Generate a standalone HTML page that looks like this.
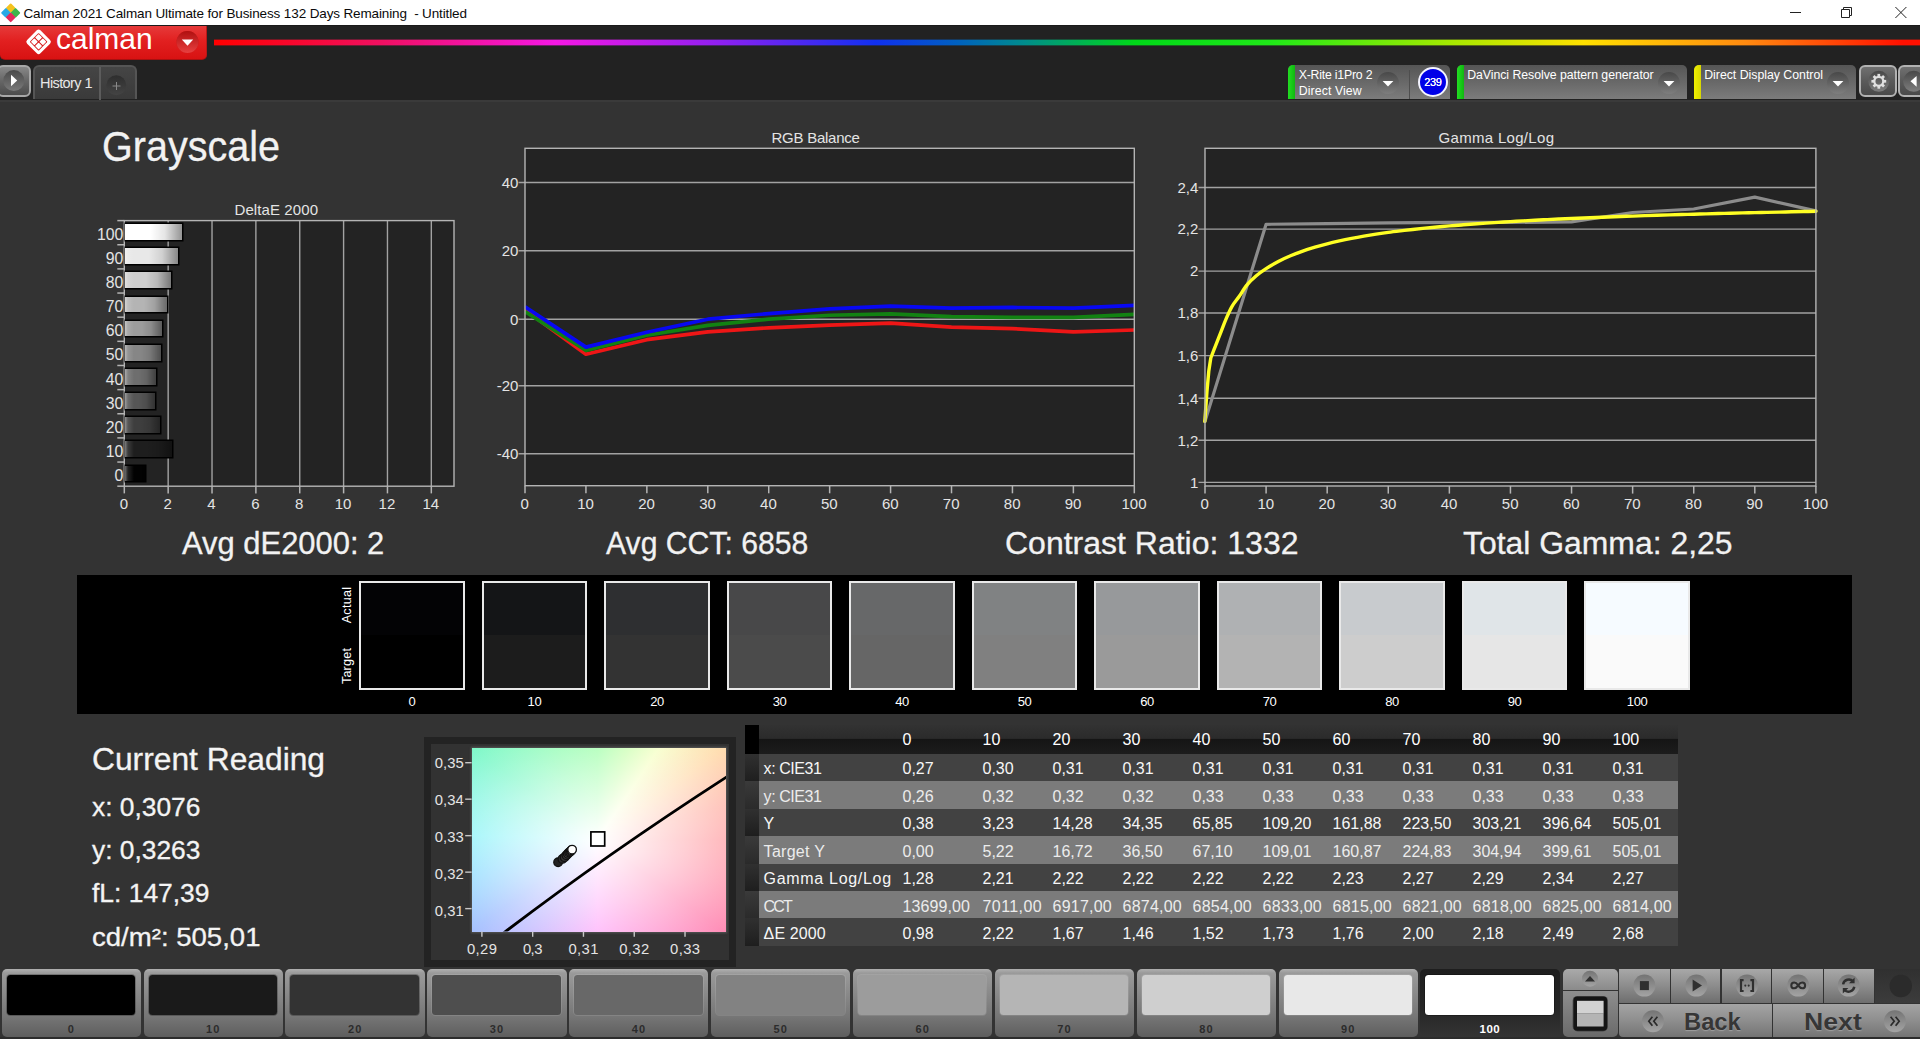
<!DOCTYPE html><html><head><meta charset="utf-8"><title>Calman</title><style>
html,body{margin:0;padding:0;}
body{width:1920px;height:1039px;overflow:hidden;background:#333;font-family:"Liberation Sans",sans-serif;position:relative;}
.t{position:absolute;white-space:nowrap;display:block;}
.b{position:absolute;box-sizing:border-box;}
svg{position:absolute;overflow:visible;}
</style></head><body><div class="b" style="left:0.00px;top:0.00px;width:1920.00px;height:26.00px;background:#fff;"></div><svg style="left:2px;top:3px" width="20" height="20" viewBox="0 0 20 20">
<g transform="translate(8.7,9.8)">
<rect x="-4.6" y="-4.6" width="9.2" height="9.2" rx="1.2" transform="translate(0,-4.6) rotate(45) scale(0.78)" fill="#f4c21f"/>
<rect x="-4.6" y="-4.6" width="9.2" height="9.2" rx="1.2" transform="translate(-4.8,0) rotate(45) scale(0.78)" fill="#27a9e6"/>
<rect x="-4.6" y="-4.6" width="9.2" height="9.2" rx="1.2" transform="translate(4.8,0) rotate(45) scale(0.78)" fill="#3fb54a"/>
<rect x="-4.6" y="-4.6" width="9.2" height="9.2" rx="1.2" transform="translate(0,4.6) rotate(45) scale(0.78)" fill="#e6285a"/>
</g></svg><span class="t" style="left:23.50px;top:5px;font-size:13.50px;line-height:17px;color:#0a0a0a;letter-spacing:-0.128px;white-space:pre;">Calman 2021 Calman Ultimate for Business 132 Days Remaining  - Untitled</span><svg style="left:1780px;top:0" width="140" height="26" viewBox="0 0 140 26">
<path d="M10 12.5h11" stroke="#222" stroke-width="1" fill="none"/>
<path d="M61.5 9.5h8v8h-8z M63.5 9.5v-2h8v8h-2" stroke="#222" stroke-width="1" fill="none"/>
<path d="M115.4 7l11 11M126.4 7l-11 11" stroke="#222" stroke-width="1" fill="none"/>
</svg><div class="b" style="left:0.00px;top:26.00px;width:1920.00px;height:74.00px;background:#222;"></div><div class="b" style="left:214.00px;top:39.00px;width:1706.00px;height:7.00px;opacity:0.38;background:linear-gradient(90deg,#ff0000 0%,#f01060 9.7%,#f418e4 20%,#9020f0 29.5%,#1030f0 38.8%,#0060c0 43.5%,#008c8c 47.5%,#00d818 54%,#20e818 62%,#a8e800 72.7%,#ffe000 80.3%,#ff8a10 89.8%,#ff1000 99%);"></div><div class="b" style="left:214.00px;top:40.00px;width:1706.00px;height:5.00px;background:linear-gradient(90deg,#ff0000 0%,#f01060 9.7%,#f418e4 20%,#9020f0 29.5%,#1030f0 38.8%,#0060c0 43.5%,#008c8c 47.5%,#00d818 54%,#20e818 62%,#a8e800 72.7%,#ffe000 80.3%,#ff8a10 89.8%,#ff1000 99%);"></div><div class="b" style="left:0.00px;top:25.00px;width:1920.00px;height:1.00px;background:#1a1a1a;"></div><div class="b" style="left:0.00px;top:26.00px;width:207.00px;height:34.00px;background:linear-gradient(180deg,#e63a3a 0%,#e22020 45%,#d81212 100%);border-radius:0 0 5px 5px;border-bottom:1px solid #a81010;border-right:1px solid #b81818;"></div><svg style="left:0;top:26px" width="207" height="33" viewBox="0 0 207 33">
<g transform="translate(38.6,15.8) rotate(45)">
<rect x="-9.4" y="-9.4" width="18.8" height="18.8" rx="2.6" fill="#fff"/>
<rect x="-6.3" y="-6.3" width="12.6" height="12.6" rx="0.8" fill="#d81c1c"/>
<rect x="-5.5" y="-5.5" width="5.0" height="5.0" rx="0.7" fill="#fff"/>
<rect x="0.5" y="-5.5" width="5.0" height="5.0" rx="0.7" fill="#fff"/>
<rect x="-5.5" y="0.5" width="5.0" height="5.0" rx="0.7" fill="#fff"/>
<rect x="0.5" y="0.5" width="5.0" height="5.0" rx="0.7" fill="#fff"/>
</g>
<circle cx="187.5" cy="16" r="11" fill="#c81818"/>
<circle cx="187.5" cy="16" r="11" fill="url(#rdg)"/>
<path d="M181.8 13.6h11.4l-5.7 6.2z" fill="#fff"/>
<defs><linearGradient id="rdg" x1="0" y1="0" x2="0" y2="1"><stop offset="0" stop-color="#b01010"/><stop offset="1" stop-color="#e84040"/></linearGradient></defs>
</svg><span class="t" style="left:56.30px;top:21px;font-size:28.60px;line-height:36px;color:#fff;transform:scaleX(1.0488);transform-origin:0 0;">calman</span><div class="b" style="left:-3.00px;top:65.00px;width:33.50px;height:32.00px;border-radius:6px;border:2px solid #a8a8a8;background:linear-gradient(180deg,#888 0%,#666 50%,#4c4c4c 100%);"></div><svg style="left:0;top:65px" width="32" height="32" viewBox="0 0 32 32">
<defs><linearGradient id="pg1" x1="0" y1="0" x2="0" y2="1"><stop offset="0" stop-color="#4a4a4a"/><stop offset="1" stop-color="#7a7a7a"/></linearGradient></defs>
<circle cx="13.8" cy="15.6" r="10.5" fill="url(#pg1)"/>
<path d="M11 9.8v11.4l6.2-5.7z" fill="#fff"/></svg><div class="b" style="left:33.00px;top:65.00px;width:104.00px;height:34.20px;border-radius:6px 6px 0 0;border:2px solid #555;border-bottom:none;background:linear-gradient(180deg,#454545 0%,#3a3a3a 100%);"></div><div class="b" style="left:99.00px;top:67.00px;width:1.50px;height:33.00px;background:#5c5c5c;"></div><span class="t" style="left:40.00px;top:74px;font-size:14.50px;line-height:18px;color:#e8e8e8;letter-spacing:-0.588px;">History 1</span><svg style="left:104px;top:73px" width="26" height="26" viewBox="0 0 26 26">
<defs><linearGradient id="pg2" x1="0" y1="0" x2="0" y2="1"><stop offset="0" stop-color="#2e2e2e"/><stop offset="1" stop-color="#444"/></linearGradient></defs>
<circle cx="12.3" cy="12.3" r="10" fill="url(#pg2)"/>
<path d="M8.5 13h8M12.5 9v8" stroke="#8a8a8a" stroke-width="1" fill="none"/></svg><svg width="0" height="0"><defs><linearGradient id="ddg" x1="0" y1="0" x2="0" y2="1"><stop offset="0" stop-color="#484848"/><stop offset="1" stop-color="#7e7e7e"/></linearGradient></defs></svg><div class="b" style="left:1288.30px;top:65.00px;width:161.50px;height:34.00px;border-radius:5px 5px 0 0;background:linear-gradient(180deg,#555 0%,#6a6a6a 55%,#7c7c7c 100%);overflow:hidden;"><div style="position:absolute;left:0;top:0;width:7px;height:100%;background:linear-gradient(90deg,#22dd22,#10b810);"></div></div><div class="b" style="left:1456.70px;top:65.00px;width:230.00px;height:34.00px;border-radius:5px 5px 0 0;background:linear-gradient(180deg,#555 0%,#6a6a6a 55%,#7c7c7c 100%);overflow:hidden;"><div style="position:absolute;left:0;top:0;width:7px;height:100%;background:linear-gradient(90deg,#22dd22,#10b810);"></div></div><div class="b" style="left:1694.20px;top:65.00px;width:161.60px;height:34.00px;border-radius:5px 5px 0 0;background:linear-gradient(180deg,#555 0%,#6a6a6a 55%,#7c7c7c 100%);overflow:hidden;"><div style="position:absolute;left:0;top:0;width:7px;height:100%;background:linear-gradient(90deg,#f0f000,#d8d800);"></div></div><div class="b" style="left:1408.50px;top:70.00px;width:1.50px;height:29.00px;background:#4e4e4e;"></div><span class="t" style="left:1298.70px;top:67px;font-size:12.30px;line-height:16px;color:#fff;letter-spacing:-0.212px;">X-Rite i1Pro 2</span><span class="t" style="left:1298.70px;top:83px;font-size:12.30px;line-height:16px;color:#fff;letter-spacing:0.103px;">Direct View</span><span class="t" style="left:1467.20px;top:67px;font-size:12.30px;line-height:16px;color:#fff;letter-spacing:-0.040px;">DaVinci Resolve pattern generator</span><span class="t" style="left:1704.20px;top:67px;font-size:12.30px;line-height:16px;color:#fff;letter-spacing:-0.006px;">Direct Display Control</span><svg style="left:1375.5px;top:70.5px" width="24" height="24" viewBox="0 0 24 24">
<circle cx="12" cy="12" r="11" fill="url(#ddg)"/><path d="M6.6 10h10.8l-5.4 5.6z" fill="#fff"/></svg><svg style="left:1657.2px;top:71.3px" width="24" height="24" viewBox="0 0 24 24">
<circle cx="12" cy="12" r="11" fill="url(#ddg)"/><path d="M6.6 10h10.8l-5.4 5.6z" fill="#fff"/></svg><svg style="left:1825.5px;top:71.3px" width="24" height="24" viewBox="0 0 24 24">
<circle cx="12" cy="12" r="11" fill="url(#ddg)"/><path d="M6.6 10h10.8l-5.4 5.6z" fill="#fff"/></svg><div class="b" style="left:1418.00px;top:67.20px;width:30.00px;height:30.00px;border-radius:50%;background:#0000e8;border:2px solid #f4f4ff;"></div><span class="t" style="left:1424.25px;top:75px;font-size:11.00px;line-height:14px;color:#fff;letter-spacing:-0.426px;text-shadow:0 0 0.4px #fff;">239</span><div class="b" style="left:1859.30px;top:65.00px;width:38.00px;height:32.00px;border-radius:6px;border:2px solid #b2b2b2;background:linear-gradient(180deg,#707070 0%,#5a5a5a 50%,#4a4a4a 100%);"></div><div class="b" style="left:1897.60px;top:65.00px;width:30.00px;height:32.00px;border-radius:6px;border:2px solid #b2b2b2;background:linear-gradient(180deg,#707070 0%,#5a5a5a 50%,#4a4a4a 100%);"></div><svg style="left:1866px;top:69px" width="26" height="26" viewBox="0 0 26 26">
<circle cx="12.8" cy="12.3" r="10.5" fill="url(#ddg)"/>
<g transform="translate(12.8,12.3)" fill="#e0e0e0">
<circle r="4.5" fill="none" stroke="#e0e0e0" stroke-width="2.3"/>
<rect x="-1.35" y="-7.4" width="2.7" height="2.6" transform="rotate(0)"/><rect x="-1.35" y="-7.4" width="2.7" height="2.6" transform="rotate(45)"/><rect x="-1.35" y="-7.4" width="2.7" height="2.6" transform="rotate(90)"/><rect x="-1.35" y="-7.4" width="2.7" height="2.6" transform="rotate(135)"/><rect x="-1.35" y="-7.4" width="2.7" height="2.6" transform="rotate(180)"/><rect x="-1.35" y="-7.4" width="2.7" height="2.6" transform="rotate(225)"/><rect x="-1.35" y="-7.4" width="2.7" height="2.6" transform="rotate(270)"/><rect x="-1.35" y="-7.4" width="2.7" height="2.6" transform="rotate(315)"/>
</g></svg><svg style="left:1900px;top:69px" width="20" height="26" viewBox="0 0 20 26">
<circle cx="13.6" cy="12.3" r="10.5" fill="url(#ddg)"/><path d="M16.6 6.9v10.8l-6.1-5.4z" fill="#fff"/></svg><div class="b" style="left:0.00px;top:100.00px;width:1920.00px;height:1.50px;background:#3a3a3a;"></div><div class="b" style="left:0.00px;top:1037.20px;width:1920.00px;height:2.00px;background:#2c2c2c;"></div><span class="t" style="left:102.00px;top:121px;font-size:42.00px;line-height:51px;color:#f2f2f2;transform:scaleX(0.9415);transform-origin:0 0;-webkit-text-stroke:0.3px #f2f2f2;">Grayscale</span><span class="t" style="left:182.00px;top:524px;font-size:31.00px;line-height:39px;color:#f2f2f2;transform:scaleX(0.9974);transform-origin:0 0;-webkit-text-stroke:0.3px #f2f2f2;">Avg dE2000: 2</span><span class="t" style="left:605.60px;top:524px;font-size:31.00px;line-height:39px;color:#f2f2f2;transform:scaleX(0.9724);transform-origin:0 0;-webkit-text-stroke:0.3px #f2f2f2;">Avg CCT: 6858</span><span class="t" style="left:1004.50px;top:524px;font-size:31.00px;line-height:39px;color:#f2f2f2;transform:scaleX(1.0322);transform-origin:0 0;-webkit-text-stroke:0.3px #f2f2f2;">Contrast Ratio: 1332</span><span class="t" style="left:1463.00px;top:524px;font-size:31.00px;line-height:39px;color:#f2f2f2;transform:scaleX(1.0290);transform-origin:0 0;-webkit-text-stroke:0.3px #f2f2f2;">Total Gamma: 2,25</span><div class="b" style="left:124.30px;top:220.60px;width:329.70px;height:265.60px;background:#232323;"></div><svg style="left:0;top:0" width="1920" height="1039"><path d="M168.16 220.60 V486.20" stroke="#a2a2a2" stroke-width="1.4"/><path d="M212.02 220.60 V486.20" stroke="#a2a2a2" stroke-width="1.4"/><path d="M255.88 220.60 V486.20" stroke="#a2a2a2" stroke-width="1.4"/><path d="M299.74 220.60 V486.20" stroke="#a2a2a2" stroke-width="1.4"/><path d="M343.60 220.60 V486.20" stroke="#a2a2a2" stroke-width="1.4"/><path d="M387.46 220.60 V486.20" stroke="#a2a2a2" stroke-width="1.4"/><path d="M431.32 220.60 V486.20" stroke="#a2a2a2" stroke-width="1.4"/><rect x="124.30" y="220.60" width="329.70" height="265.60" fill="none" stroke="#b4b4b4" stroke-width="1.4"/><path d="M124.30 486.20 V493.40" stroke="#b4b4b4" stroke-width="1.5"/><path d="M168.16 486.20 V493.40" stroke="#b4b4b4" stroke-width="1.5"/><path d="M212.02 486.20 V493.40" stroke="#b4b4b4" stroke-width="1.5"/><path d="M255.88 486.20 V493.40" stroke="#b4b4b4" stroke-width="1.5"/><path d="M299.74 486.20 V493.40" stroke="#b4b4b4" stroke-width="1.5"/><path d="M343.60 486.20 V493.40" stroke="#b4b4b4" stroke-width="1.5"/><path d="M387.46 486.20 V493.40" stroke="#b4b4b4" stroke-width="1.5"/><path d="M431.32 486.20 V493.40" stroke="#b4b4b4" stroke-width="1.5"/><path d="M117.30 220.60 H124.30" stroke="#b4b4b4" stroke-width="1.5"/><path d="M117.30 244.75 H124.30" stroke="#b4b4b4" stroke-width="1.5"/><path d="M117.30 268.89 H124.30" stroke="#b4b4b4" stroke-width="1.5"/><path d="M117.30 293.04 H124.30" stroke="#b4b4b4" stroke-width="1.5"/><path d="M117.30 317.18 H124.30" stroke="#b4b4b4" stroke-width="1.5"/><path d="M117.30 341.33 H124.30" stroke="#b4b4b4" stroke-width="1.5"/><path d="M117.30 365.47 H124.30" stroke="#b4b4b4" stroke-width="1.5"/><path d="M117.30 389.62 H124.30" stroke="#b4b4b4" stroke-width="1.5"/><path d="M117.30 413.76 H124.30" stroke="#b4b4b4" stroke-width="1.5"/><path d="M117.30 437.91 H124.30" stroke="#b4b4b4" stroke-width="1.5"/><path d="M117.30 462.05 H124.30" stroke="#b4b4b4" stroke-width="1.5"/><path d="M117.30 486.20 H124.30" stroke="#b4b4b4" stroke-width="1.5"/></svg><div class="b" style="left:125.00px;top:223.10px;width:57.87px;height:17.70px;background:linear-gradient(90deg,rgba(255,255,255,0.00) 0px,rgba(255,255,255,0.00) 3px,rgba(255,255,255,0) 9px,rgba(0,0,0,0) 45%,rgba(0,0,0,0.10) 70%,rgba(0,0,0,0.42) 100%),rgb(255,255,255);border:1.5px solid #000;border-left:none;box-shadow:0 0 0 0.5px #000;"></div><span class="t" style="left:96.94px;top:225px;font-size:15.80px;line-height:19px;color:#e4e4e4;">100</span><div class="b" style="left:125.00px;top:247.25px;width:53.71px;height:17.70px;background:linear-gradient(90deg,rgba(255,255,255,0.42) 0px,rgba(255,255,255,0.13) 3px,rgba(255,255,255,0) 9px,rgba(0,0,0,0) 45%,rgba(0,0,0,0.10) 70%,rgba(0,0,0,0.42) 100%),rgb(232,232,232);border:1.5px solid #000;border-left:none;box-shadow:0 0 0 0.5px #000;"></div><span class="t" style="left:105.73px;top:249px;font-size:15.80px;line-height:19px;color:#e4e4e4;">90</span><div class="b" style="left:125.00px;top:271.39px;width:46.91px;height:17.70px;background:linear-gradient(90deg,rgba(255,255,255,0.42) 0px,rgba(255,255,255,0.13) 3px,rgba(255,255,255,0) 9px,rgba(0,0,0,0) 45%,rgba(0,0,0,0.10) 70%,rgba(0,0,0,0.42) 100%),rgb(206,206,206);border:1.5px solid #000;border-left:none;box-shadow:0 0 0 0.5px #000;"></div><span class="t" style="left:105.73px;top:273px;font-size:15.80px;line-height:19px;color:#e4e4e4;">80</span><div class="b" style="left:125.00px;top:295.54px;width:42.96px;height:17.70px;background:linear-gradient(90deg,rgba(255,255,255,0.42) 0px,rgba(255,255,255,0.13) 3px,rgba(255,255,255,0) 9px,rgba(0,0,0,0) 45%,rgba(0,0,0,0.10) 70%,rgba(0,0,0,0.42) 100%),rgb(180,180,180);border:1.5px solid #000;border-left:none;box-shadow:0 0 0 0.5px #000;"></div><span class="t" style="left:105.73px;top:297px;font-size:15.80px;line-height:19px;color:#e4e4e4;">70</span><div class="b" style="left:125.00px;top:319.68px;width:37.70px;height:17.70px;background:linear-gradient(90deg,rgba(255,255,255,0.42) 0px,rgba(255,255,255,0.13) 3px,rgba(255,255,255,0) 9px,rgba(0,0,0,0) 45%,rgba(0,0,0,0.10) 70%,rgba(0,0,0,0.42) 100%),rgb(156,156,156);border:1.5px solid #000;border-left:none;box-shadow:0 0 0 0.5px #000;"></div><span class="t" style="left:105.73px;top:321px;font-size:15.80px;line-height:19px;color:#e4e4e4;">60</span><div class="b" style="left:125.00px;top:343.83px;width:37.04px;height:17.70px;background:linear-gradient(90deg,rgba(255,255,255,0.42) 0px,rgba(255,255,255,0.13) 3px,rgba(255,255,255,0) 9px,rgba(0,0,0,0) 45%,rgba(0,0,0,0.10) 70%,rgba(0,0,0,0.42) 100%),rgb(134,134,134);border:1.5px solid #000;border-left:none;box-shadow:0 0 0 0.5px #000;"></div><span class="t" style="left:105.73px;top:345px;font-size:15.80px;line-height:19px;color:#e4e4e4;">50</span><div class="b" style="left:125.00px;top:367.97px;width:32.43px;height:17.70px;background:linear-gradient(90deg,rgba(255,255,255,0.42) 0px,rgba(255,255,255,0.13) 3px,rgba(255,255,255,0) 9px,rgba(0,0,0,0) 45%,rgba(0,0,0,0.10) 70%,rgba(0,0,0,0.42) 100%),rgb(110,110,110);border:1.5px solid #000;border-left:none;box-shadow:0 0 0 0.5px #000;"></div><span class="t" style="left:105.73px;top:370px;font-size:15.80px;line-height:19px;color:#e4e4e4;">40</span><div class="b" style="left:125.00px;top:392.12px;width:31.12px;height:17.70px;background:linear-gradient(90deg,rgba(255,255,255,0.42) 0px,rgba(255,255,255,0.13) 3px,rgba(255,255,255,0) 9px,rgba(0,0,0,0) 45%,rgba(0,0,0,0.10) 70%,rgba(0,0,0,0.42) 100%),rgb(86,86,86);border:1.5px solid #000;border-left:none;box-shadow:0 0 0 0.5px #000;"></div><span class="t" style="left:105.73px;top:394px;font-size:15.80px;line-height:19px;color:#e4e4e4;">30</span><div class="b" style="left:125.00px;top:416.26px;width:35.72px;height:17.70px;background:linear-gradient(90deg,rgba(255,255,255,0.42) 0px,rgba(255,255,255,0.13) 3px,rgba(255,255,255,0) 9px,rgba(0,0,0,0) 45%,rgba(0,0,0,0.10) 70%,rgba(0,0,0,0.42) 100%),rgb(62,62,62);border:1.5px solid #000;border-left:none;box-shadow:0 0 0 0.5px #000;"></div><span class="t" style="left:105.73px;top:418px;font-size:15.80px;line-height:19px;color:#e4e4e4;">20</span><div class="b" style="left:125.00px;top:440.41px;width:47.78px;height:17.70px;background:linear-gradient(90deg,rgba(255,255,255,0.42) 0px,rgba(255,255,255,0.13) 3px,rgba(255,255,255,0) 9px,rgba(0,0,0,0) 45%,rgba(0,0,0,0.10) 70%,rgba(0,0,0,0.42) 100%),rgb(30,30,30);border:1.5px solid #000;border-left:none;box-shadow:0 0 0 0.5px #000;"></div><span class="t" style="left:105.73px;top:442px;font-size:15.80px;line-height:19px;color:#e4e4e4;">10</span><div class="b" style="left:125.00px;top:464.55px;width:20.59px;height:17.70px;background:linear-gradient(90deg,rgba(255,255,255,0.42) 0px,rgba(255,255,255,0.13) 3px,rgba(255,255,255,0) 9px,rgba(0,0,0,0) 45%,rgba(0,0,0,0.10) 70%,rgba(0,0,0,0.42) 100%),rgb(2,2,2);border:1.5px solid #000;border-left:none;box-shadow:0 0 0 0.5px #000;"></div><span class="t" style="left:114.51px;top:466px;font-size:15.80px;line-height:19px;color:#e4e4e4;">0</span><span class="t" style="left:119.63px;top:494px;font-size:15.00px;line-height:19px;color:#e4e4e4;">0</span><span class="t" style="left:163.49px;top:494px;font-size:15.00px;line-height:19px;color:#e4e4e4;">2</span><span class="t" style="left:207.35px;top:494px;font-size:15.00px;line-height:19px;color:#e4e4e4;">4</span><span class="t" style="left:251.21px;top:494px;font-size:15.00px;line-height:19px;color:#e4e4e4;">6</span><span class="t" style="left:295.07px;top:494px;font-size:15.00px;line-height:19px;color:#e4e4e4;">8</span><span class="t" style="left:334.76px;top:494px;font-size:15.00px;line-height:19px;color:#e4e4e4;">10</span><span class="t" style="left:378.62px;top:494px;font-size:15.00px;line-height:19px;color:#e4e4e4;">12</span><span class="t" style="left:422.48px;top:494px;font-size:15.00px;line-height:19px;color:#e4e4e4;">14</span><span class="t" style="left:234.50px;top:200px;font-size:15.00px;line-height:19px;color:#e4e4e4;letter-spacing:0.093px;">DeltaE 2000</span><div class="b" style="left:525.00px;top:148.30px;width:609.30px;height:337.40px;background:#232323;"></div><span class="t" style="left:501.71px;top:173px;font-size:15.00px;line-height:19px;color:#e4e4e4;">40</span><span class="t" style="left:501.71px;top:241px;font-size:15.00px;line-height:19px;color:#e4e4e4;">20</span><span class="t" style="left:510.06px;top:310px;font-size:15.00px;line-height:19px;color:#e4e4e4;">0</span><span class="t" style="left:496.72px;top:376px;font-size:15.00px;line-height:19px;color:#e4e4e4;">-20</span><span class="t" style="left:496.72px;top:444px;font-size:15.00px;line-height:19px;color:#e4e4e4;">-40</span><svg style="left:0;top:0" width="1920" height="1039"><path d="M518.50 182.50 H1134.30" stroke="#a2a2a2" stroke-width="1.4"/><path d="M518.50 250.80 H1134.30" stroke="#a2a2a2" stroke-width="1.4"/><path d="M518.50 319.20 H1134.30" stroke="#a2a2a2" stroke-width="1.4"/><path d="M518.50 385.80 H1134.30" stroke="#a2a2a2" stroke-width="1.4"/><path d="M518.50 453.70 H1134.30" stroke="#a2a2a2" stroke-width="1.4"/><clipPath id="rgbc"><rect x="525.00" y="148.30" width="610.30" height="337.40"/></clipPath><g clip-path="url(#rgbc)" fill="none" stroke-width="3.7" stroke-linejoin="round"><path d="M525.00 309.85L585.93 354.26L646.86 339.68L707.79 331.88L768.72 327.81L829.65 325.10L890.58 323.07L951.51 327.14L1012.44 328.66L1073.37 331.88L1134.30 330.02" stroke="#ee1616"/><path d="M525.00 311.54L585.93 350.53L646.86 335.27L707.79 325.44L768.72 319.20L829.65 315.27L890.58 313.92L951.51 316.63L1012.44 317.41L1073.37 317.41L1134.30 314.42" stroke="#128212"/><path d="M525.00 306.80L585.93 347.14L646.86 332.22L707.79 319.20L768.72 313.58L829.65 308.83L890.58 306.12L951.51 308.15L1012.44 307.47L1073.37 308.15L1134.30 305.44" stroke="#0808f2"/></g><rect x="525.00" y="148.30" width="609.30" height="337.40" fill="none" stroke="#b4b4b4" stroke-width="1.4"/><path d="M525.00 485.70 V493.30" stroke="#b4b4b4" stroke-width="1.5"/><path d="M585.93 485.70 V493.30" stroke="#b4b4b4" stroke-width="1.5"/><path d="M646.86 485.70 V493.30" stroke="#b4b4b4" stroke-width="1.5"/><path d="M707.79 485.70 V493.30" stroke="#b4b4b4" stroke-width="1.5"/><path d="M768.72 485.70 V493.30" stroke="#b4b4b4" stroke-width="1.5"/><path d="M829.65 485.70 V493.30" stroke="#b4b4b4" stroke-width="1.5"/><path d="M890.58 485.70 V493.30" stroke="#b4b4b4" stroke-width="1.5"/><path d="M951.51 485.70 V493.30" stroke="#b4b4b4" stroke-width="1.5"/><path d="M1012.44 485.70 V493.30" stroke="#b4b4b4" stroke-width="1.5"/><path d="M1073.37 485.70 V493.30" stroke="#b4b4b4" stroke-width="1.5"/><path d="M1134.30 485.70 V493.30" stroke="#b4b4b4" stroke-width="1.5"/></svg><span class="t" style="left:520.53px;top:494px;font-size:15.00px;line-height:19px;color:#e4e4e4;">0</span><span class="t" style="left:577.29px;top:494px;font-size:15.00px;line-height:19px;color:#e4e4e4;">10</span><span class="t" style="left:638.22px;top:494px;font-size:15.00px;line-height:19px;color:#e4e4e4;">20</span><span class="t" style="left:699.15px;top:494px;font-size:15.00px;line-height:19px;color:#e4e4e4;">30</span><span class="t" style="left:760.08px;top:494px;font-size:15.00px;line-height:19px;color:#e4e4e4;">40</span><span class="t" style="left:821.01px;top:494px;font-size:15.00px;line-height:19px;color:#e4e4e4;">50</span><span class="t" style="left:881.94px;top:494px;font-size:15.00px;line-height:19px;color:#e4e4e4;">60</span><span class="t" style="left:942.87px;top:494px;font-size:15.00px;line-height:19px;color:#e4e4e4;">70</span><span class="t" style="left:1003.80px;top:494px;font-size:15.00px;line-height:19px;color:#e4e4e4;">80</span><span class="t" style="left:1064.73px;top:494px;font-size:15.00px;line-height:19px;color:#e4e4e4;">90</span><span class="t" style="left:1121.48px;top:494px;font-size:15.00px;line-height:19px;color:#e4e4e4;">100</span><span class="t" style="left:771.50px;top:128px;font-size:15.00px;line-height:19px;color:#e4e4e4;letter-spacing:-0.258px;">RGB Balance</span><div class="b" style="left:1205.00px;top:148.30px;width:610.90px;height:337.70px;background:#232323;"></div><span class="t" style="left:1177.54px;top:178px;font-size:15.00px;line-height:19px;color:#e4e4e4;">2,4</span><span class="t" style="left:1177.54px;top:219px;font-size:15.00px;line-height:19px;color:#e4e4e4;">2,2</span><span class="t" style="left:1190.06px;top:261px;font-size:15.00px;line-height:19px;color:#e4e4e4;">2</span><span class="t" style="left:1177.54px;top:303px;font-size:15.00px;line-height:19px;color:#e4e4e4;">1,8</span><span class="t" style="left:1177.54px;top:346px;font-size:15.00px;line-height:19px;color:#e4e4e4;">1,6</span><span class="t" style="left:1177.54px;top:389px;font-size:15.00px;line-height:19px;color:#e4e4e4;">1,4</span><span class="t" style="left:1177.54px;top:431px;font-size:15.00px;line-height:19px;color:#e4e4e4;">1,2</span><span class="t" style="left:1190.06px;top:473px;font-size:15.00px;line-height:19px;color:#e4e4e4;">1</span><svg style="left:0;top:0" width="1920" height="1039"><path d="M1198.50 187.50 H1815.90" stroke="#a2a2a2" stroke-width="1.4"/><path d="M1198.50 229.10 H1815.90" stroke="#a2a2a2" stroke-width="1.4"/><path d="M1198.50 271.10 H1815.90" stroke="#a2a2a2" stroke-width="1.4"/><path d="M1198.50 313.00 H1815.90" stroke="#a2a2a2" stroke-width="1.4"/><path d="M1198.50 355.60 H1815.90" stroke="#a2a2a2" stroke-width="1.4"/><path d="M1198.50 398.30 H1815.90" stroke="#a2a2a2" stroke-width="1.4"/><path d="M1198.50 440.30 H1815.90" stroke="#a2a2a2" stroke-width="1.4"/><path d="M1198.50 482.40 H1815.90" stroke="#a2a2a2" stroke-width="1.4"/><g fill="none" stroke-linejoin="round" stroke-linecap="round"><path d="M1205.00 421.40L1266.09 224.30L1327.18 223.60L1388.27 222.90L1449.36 222.40L1510.45 222.40L1571.54 221.90L1632.63 212.50L1693.72 209.00L1754.81 197.10L1815.90 210.90" stroke="#8c8c8c" stroke-width="3.2"/><path d="M1204.80 421.40L1207.00 391.00L1208.80 371.00L1210.80 358.00 L1210.80 358.00C1211.55 356.05 1213.60 350.65 1215.30 346.30C1217.00 341.95 1219.20 336.47 1221.00 331.90C1222.80 327.33 1224.28 323.12 1226.10 318.90C1227.92 314.68 1229.73 310.33 1231.90 306.60C1234.07 302.87 1236.58 300.12 1239.10 296.50C1241.62 292.88 1244.18 288.32 1247.00 284.90C1249.82 281.48 1252.82 278.70 1256.00 276.00C1259.18 273.30 1262.37 271.11 1266.09 268.69C1269.81 266.27 1274.24 263.64 1278.31 261.49C1282.38 259.33 1286.45 257.50 1290.53 255.77C1294.60 254.04 1298.67 252.52 1302.74 251.09C1306.82 249.66 1310.89 248.39 1314.96 247.18C1319.03 245.97 1323.11 244.88 1327.18 243.84C1331.25 242.80 1335.33 241.86 1339.40 240.95C1343.47 240.05 1347.54 239.22 1351.62 238.42C1355.69 237.63 1359.76 236.89 1363.83 236.18C1367.91 235.47 1371.98 234.81 1376.05 234.17C1380.12 233.54 1384.20 232.92 1388.27 232.36C1392.34 231.81 1396.42 231.32 1400.49 230.83C1404.56 230.34 1408.63 229.88 1412.71 229.44C1416.78 229.00 1420.85 228.58 1424.92 228.17C1429.00 227.76 1433.07 227.38 1437.14 227.01C1441.21 226.63 1445.29 226.28 1449.36 225.93C1453.43 225.59 1457.51 225.26 1461.58 224.94C1465.65 224.62 1469.72 224.32 1473.80 224.02C1477.87 223.73 1481.94 223.44 1486.01 223.17C1490.09 222.89 1494.16 222.63 1498.23 222.37C1502.30 222.11 1506.38 221.86 1510.45 221.62C1514.52 221.38 1518.60 221.14 1522.67 220.92C1526.74 220.69 1530.81 220.47 1534.89 220.26C1538.96 220.04 1543.03 219.84 1547.10 219.63C1551.18 219.43 1555.25 219.24 1559.32 219.04C1563.39 218.85 1567.47 218.67 1571.54 218.49C1575.61 218.31 1579.69 218.13 1583.76 217.96C1587.83 217.79 1591.90 217.62 1595.98 217.46C1600.05 217.29 1604.12 217.13 1608.19 216.98C1612.27 216.82 1616.34 216.67 1620.41 216.52C1624.48 216.38 1628.56 216.23 1632.63 216.09C1636.70 215.95 1640.78 215.81 1644.85 215.67C1648.92 215.54 1652.99 215.41 1657.07 215.28C1661.14 215.15 1665.21 215.02 1669.28 214.90C1673.36 214.77 1677.43 214.65 1681.50 214.53C1685.57 214.41 1689.65 214.30 1693.72 214.18C1697.79 214.07 1701.87 213.96 1705.94 213.85C1710.01 213.74 1714.08 213.63 1718.16 213.52C1722.23 213.42 1726.30 213.31 1730.37 213.21C1734.45 213.11 1738.52 213.01 1742.59 212.91C1746.66 212.81 1750.74 212.72 1754.81 212.62C1758.88 212.53 1762.96 212.44 1767.03 212.34C1771.10 212.25 1775.17 212.16 1779.25 212.08C1783.32 211.99 1787.39 211.90 1791.46 211.81C1795.54 211.73 1799.61 211.65 1803.68 211.56C1807.75 211.48 1813.86 211.36 1815.90 211.32" stroke="#ffff24" stroke-width="3.4"/></g><rect x="1205.00" y="148.30" width="610.90" height="337.70" fill="none" stroke="#b4b4b4" stroke-width="1.4"/><path d="M1205.00 486.00 V493.60" stroke="#b4b4b4" stroke-width="1.5"/><path d="M1266.09 486.00 V493.60" stroke="#b4b4b4" stroke-width="1.5"/><path d="M1327.18 486.00 V493.60" stroke="#b4b4b4" stroke-width="1.5"/><path d="M1388.27 486.00 V493.60" stroke="#b4b4b4" stroke-width="1.5"/><path d="M1449.36 486.00 V493.60" stroke="#b4b4b4" stroke-width="1.5"/><path d="M1510.45 486.00 V493.60" stroke="#b4b4b4" stroke-width="1.5"/><path d="M1571.54 486.00 V493.60" stroke="#b4b4b4" stroke-width="1.5"/><path d="M1632.63 486.00 V493.60" stroke="#b4b4b4" stroke-width="1.5"/><path d="M1693.72 486.00 V493.60" stroke="#b4b4b4" stroke-width="1.5"/><path d="M1754.81 486.00 V493.60" stroke="#b4b4b4" stroke-width="1.5"/><path d="M1815.90 486.00 V493.60" stroke="#b4b4b4" stroke-width="1.5"/></svg><span class="t" style="left:1200.53px;top:494px;font-size:15.00px;line-height:19px;color:#e4e4e4;">0</span><span class="t" style="left:1257.45px;top:494px;font-size:15.00px;line-height:19px;color:#e4e4e4;">10</span><span class="t" style="left:1318.54px;top:494px;font-size:15.00px;line-height:19px;color:#e4e4e4;">20</span><span class="t" style="left:1379.63px;top:494px;font-size:15.00px;line-height:19px;color:#e4e4e4;">30</span><span class="t" style="left:1440.72px;top:494px;font-size:15.00px;line-height:19px;color:#e4e4e4;">40</span><span class="t" style="left:1501.81px;top:494px;font-size:15.00px;line-height:19px;color:#e4e4e4;">50</span><span class="t" style="left:1562.90px;top:494px;font-size:15.00px;line-height:19px;color:#e4e4e4;">60</span><span class="t" style="left:1623.99px;top:494px;font-size:15.00px;line-height:19px;color:#e4e4e4;">70</span><span class="t" style="left:1685.08px;top:494px;font-size:15.00px;line-height:19px;color:#e4e4e4;">80</span><span class="t" style="left:1746.17px;top:494px;font-size:15.00px;line-height:19px;color:#e4e4e4;">90</span><span class="t" style="left:1803.08px;top:494px;font-size:15.00px;line-height:19px;color:#e4e4e4;">100</span><span class="t" style="left:1438.50px;top:128px;font-size:15.00px;line-height:19px;color:#e4e4e4;letter-spacing:0.313px;">Gamma Log/Log</span><div class="b" style="left:76.50px;top:574.60px;width:1775.00px;height:139.20px;background:#000;"></div><div class="b" style="left:359.20px;top:581.00px;width:105.40px;height:109.40px;border:2px solid #e9e9e9;background:linear-gradient(180deg,#030305 0,#030305 50%,#000000 50%,#000000 100%);"></div><span class="t" style="left:408.48px;top:693px;font-size:13.00px;line-height:17px;color:#fff;">0</span><div class="b" style="left:481.72px;top:581.00px;width:105.40px;height:109.40px;border:2px solid #e9e9e9;background:linear-gradient(180deg,#141517 0,#141517 50%,#1c1c1c 50%,#1c1c1c 100%);"></div><span class="t" style="left:527.61px;top:693px;font-size:13.00px;line-height:17px;color:#fff;letter-spacing:-0.434px;">10</span><div class="b" style="left:604.24px;top:581.00px;width:105.40px;height:109.40px;border:2px solid #e9e9e9;background:linear-gradient(180deg,#2e2f31 0,#2e2f31 50%,#333333 50%,#333333 100%);"></div><span class="t" style="left:650.13px;top:693px;font-size:13.00px;line-height:17px;color:#fff;letter-spacing:-0.434px;">20</span><div class="b" style="left:726.76px;top:581.00px;width:105.40px;height:109.40px;border:2px solid #e9e9e9;background:linear-gradient(180deg,#484849 0,#484849 50%,#4b4b4b 50%,#4b4b4b 100%);"></div><span class="t" style="left:772.65px;top:693px;font-size:13.00px;line-height:17px;color:#fff;letter-spacing:-0.434px;">30</span><div class="b" style="left:849.28px;top:581.00px;width:105.40px;height:109.40px;border:2px solid #e9e9e9;background:linear-gradient(180deg,#676869 0,#676869 50%,#666666 50%,#666666 100%);"></div><span class="t" style="left:895.17px;top:693px;font-size:13.00px;line-height:17px;color:#fff;letter-spacing:-0.434px;">40</span><div class="b" style="left:971.80px;top:581.00px;width:105.40px;height:109.40px;border:2px solid #e9e9e9;background:linear-gradient(180deg,#808283 0,#808283 50%,#808080 50%,#808080 100%);"></div><span class="t" style="left:1017.69px;top:693px;font-size:13.00px;line-height:17px;color:#fff;letter-spacing:-0.434px;">50</span><div class="b" style="left:1094.32px;top:581.00px;width:105.40px;height:109.40px;border:2px solid #e9e9e9;background:linear-gradient(180deg,#97999b 0,#97999b 50%,#9a9a9a 50%,#9a9a9a 100%);"></div><span class="t" style="left:1140.21px;top:693px;font-size:13.00px;line-height:17px;color:#fff;letter-spacing:-0.434px;">60</span><div class="b" style="left:1216.84px;top:581.00px;width:105.40px;height:109.40px;border:2px solid #e9e9e9;background:linear-gradient(180deg,#afb1b3 0,#afb1b3 50%,#b3b3b3 50%,#b3b3b3 100%);"></div><span class="t" style="left:1262.73px;top:693px;font-size:13.00px;line-height:17px;color:#fff;letter-spacing:-0.434px;">70</span><div class="b" style="left:1339.36px;top:581.00px;width:105.40px;height:109.40px;border:2px solid #e9e9e9;background:linear-gradient(180deg,#c8cbce 0,#c8cbce 50%,#cdcdcd 50%,#cdcdcd 100%);"></div><span class="t" style="left:1385.25px;top:693px;font-size:13.00px;line-height:17px;color:#fff;letter-spacing:-0.434px;">80</span><div class="b" style="left:1461.88px;top:581.00px;width:105.40px;height:109.40px;border:2px solid #e9e9e9;background:linear-gradient(180deg,#e0e5e8 0,#e0e5e8 50%,#e6e6e6 50%,#e6e6e6 100%);"></div><span class="t" style="left:1507.77px;top:693px;font-size:13.00px;line-height:17px;color:#fff;letter-spacing:-0.434px;">90</span><div class="b" style="left:1584.40px;top:581.00px;width:105.40px;height:109.40px;border:2px solid #e9e9e9;background:linear-gradient(180deg,#f6fbff 0,#f6fbff 50%,#fafafa 50%,#fafafa 100%);"></div><span class="t" style="left:1626.78px;top:693px;font-size:13.00px;line-height:17px;color:#fff;letter-spacing:-0.325px;">100</span><span class="t" style="left:346.8px;top:605.0px;font-size:12.6px;line-height:12px;color:#fff;letter-spacing:0.276px;transform:translate(-50%,-50%) rotate(-90deg);">Actual</span><span class="t" style="left:346.8px;top:666.0px;font-size:12.6px;line-height:12px;color:#fff;letter-spacing:0.195px;transform:translate(-50%,-50%) rotate(-90deg);">Target</span><span class="t" style="left:92.00px;top:740px;font-size:30.50px;line-height:38px;color:#f4f4f4;transform:scaleX(1.0412);transform-origin:0 0;-webkit-text-stroke:0.3px #f4f4f4;">Current Reading</span><span class="t" style="left:92.00px;top:791px;font-size:25.50px;line-height:32px;color:#f4f4f4;transform:scaleX(1.0331);transform-origin:0 0;-webkit-text-stroke:0.3px #f4f4f4;">x: 0,3076</span><span class="t" style="left:92.00px;top:834px;font-size:25.50px;line-height:32px;color:#f4f4f4;transform:scaleX(1.0331);transform-origin:0 0;-webkit-text-stroke:0.3px #f4f4f4;">y: 0,3263</span><span class="t" style="left:92.00px;top:877px;font-size:25.50px;line-height:32px;color:#f4f4f4;transform:scaleX(1.0357);transform-origin:0 0;-webkit-text-stroke:0.3px #f4f4f4;">fL: 147,39</span><span class="t" style="left:92.00px;top:921px;font-size:25.50px;line-height:32px;color:#f4f4f4;transform:scaleX(1.0806);transform-origin:0 0;-webkit-text-stroke:0.3px #f4f4f4;">cd/m²: 505,01</span><div class="b" style="left:424.20px;top:737.40px;width:311.80px;height:229.20px;background:#323232;border:7px solid #232323;"></div><div class="b" style="left:472.00px;top:748.00px;width:254.00px;height:183.50px;background:radial-gradient(ellipse farthest-corner at 49.4% 49.8%,rgba(255,255,255,1) 0%,rgba(255,255,255,0.93) 8%,rgba(255,255,255,0.52) 50%,rgba(255,255,255,0) 100%),conic-gradient(from 0deg at 49.4% 49.8%,#9bffa6 0deg,#c8ffae 18deg,#f6ffc3 34deg,#ffdcae 54deg,#ffb0a4 75deg,#ff9ba0 90deg,#ff8cb6 126deg,#ff9ce0 160deg,#ffa8fa 180deg,#c8b4ff 212deg,#a4c0ff 234deg,#8cdcff 255deg,#82f3f8 272deg,#7cf8c8 306deg,#8cfcb0 335deg,#9bffa6 360deg);box-shadow:0 0 2px 1px rgba(90,90,90,0.9);"></div><span class="t" style="left:434.80px;top:754px;font-size:14.80px;line-height:18px;color:#e4e4e4;letter-spacing:0.032px;">0,35</span><span class="t" style="left:434.80px;top:791px;font-size:14.80px;line-height:18px;color:#e4e4e4;letter-spacing:0.032px;">0,34</span><span class="t" style="left:434.80px;top:828px;font-size:14.80px;line-height:18px;color:#e4e4e4;letter-spacing:0.032px;">0,33</span><span class="t" style="left:434.80px;top:865px;font-size:14.80px;line-height:18px;color:#e4e4e4;letter-spacing:0.032px;">0,32</span><span class="t" style="left:434.80px;top:902px;font-size:14.80px;line-height:18px;color:#e4e4e4;letter-spacing:0.032px;">0,31</span><span class="t" style="left:466.90px;top:940px;font-size:14.80px;line-height:18px;color:#e4e4e4;letter-spacing:0.399px;">0,29</span><span class="t" style="left:522.93px;top:940px;font-size:14.80px;line-height:18px;color:#e4e4e4;letter-spacing:-0.537px;">0,3</span><span class="t" style="left:568.46px;top:940px;font-size:14.80px;line-height:18px;color:#e4e4e4;letter-spacing:0.399px;">0,31</span><span class="t" style="left:619.24px;top:940px;font-size:14.80px;line-height:18px;color:#e4e4e4;letter-spacing:0.399px;">0,32</span><span class="t" style="left:670.02px;top:940px;font-size:14.80px;line-height:18px;color:#e4e4e4;letter-spacing:0.399px;">0,33</span><svg style="left:0;top:0" width="1920" height="1039"><clipPath id="ciec"><rect x="472.00" y="748.00" width="254.00" height="183.50"/></clipPath><g clip-path="url(#ciec)"><path d="M503 933.5 Q604.8 855.6 727.5 776.4" fill="none" stroke="#000" stroke-width="2.9"/></g><path d="M465.20 762.70 H471.60" stroke="#c8c8c8" stroke-width="1.4"/><path d="M465.20 799.18 H471.60" stroke="#c8c8c8" stroke-width="1.4"/><path d="M465.20 835.66 H471.60" stroke="#c8c8c8" stroke-width="1.4"/><path d="M465.20 872.14 H471.60" stroke="#c8c8c8" stroke-width="1.4"/><path d="M465.20 908.62 H471.60" stroke="#c8c8c8" stroke-width="1.4"/><path d="M481.90 931.60 V936.80" stroke="#c8c8c8" stroke-width="1.4"/><path d="M532.68 931.60 V936.80" stroke="#c8c8c8" stroke-width="1.4"/><path d="M583.46 931.60 V936.80" stroke="#c8c8c8" stroke-width="1.4"/><path d="M634.24 931.60 V936.80" stroke="#c8c8c8" stroke-width="1.4"/><path d="M685.02 931.60 V936.80" stroke="#c8c8c8" stroke-width="1.4"/><circle cx="558.1" cy="862.3" r="4.3" fill="rgb(34,34,34)" stroke="#111" stroke-width="1.3"/><circle cx="562.4" cy="858.9" r="4.3" fill="rgb(44,44,44)" stroke="#111" stroke-width="1.3"/><circle cx="564.6" cy="857.2" r="4.3" fill="rgb(52,52,52)" stroke="#111" stroke-width="1.3"/><circle cx="566.4" cy="855.2" r="4.3" fill="rgb(60,60,60)" stroke="#111" stroke-width="1.3"/><circle cx="567.8" cy="853.8" r="4.3" fill="rgb(70,70,70)" stroke="#111" stroke-width="1.3"/><circle cx="569.0" cy="852.6" r="4.3" fill="rgb(82,82,82)" stroke="#111" stroke-width="1.3"/><circle cx="570.0" cy="851.7" r="4.3" fill="rgb(100,100,100)" stroke="#111" stroke-width="1.3"/><circle cx="570.8" cy="850.9" r="4.3" fill="rgb(130,130,130)" stroke="#111" stroke-width="1.3"/><circle cx="571.5" cy="850.2" r="4.3" fill="rgb(180,180,180)" stroke="#111" stroke-width="1.3"/><circle cx="572.1" cy="849.6" r="4.3" fill="rgb(255,255,255)" stroke="#111" stroke-width="1.3"/><rect x="590.9" y="831.9" width="13.8" height="14.1" fill="#fff" stroke="#000" stroke-width="1.7"/></svg><div class="b" style="left:745.00px;top:725.00px;width:933.30px;height:29.00px;background:linear-gradient(180deg,#323232 0%,#2b2b2b 46%,#151515 50%,#1c1c1c 100%);"></div><div class="b" style="left:745.00px;top:725.00px;width:14.00px;height:29.00px;background:#000;"></div><span class="t" style="left:902.50px;top:729px;font-size:16.00px;line-height:21px;color:#fff;">0</span><span class="t" style="left:982.50px;top:729px;font-size:16.00px;line-height:21px;color:#fff;">10</span><span class="t" style="left:1052.50px;top:729px;font-size:16.00px;line-height:21px;color:#fff;">20</span><span class="t" style="left:1122.50px;top:729px;font-size:16.00px;line-height:21px;color:#fff;">30</span><span class="t" style="left:1192.50px;top:729px;font-size:16.00px;line-height:21px;color:#fff;">40</span><span class="t" style="left:1262.50px;top:729px;font-size:16.00px;line-height:21px;color:#fff;">50</span><span class="t" style="left:1332.50px;top:729px;font-size:16.00px;line-height:21px;color:#fff;">60</span><span class="t" style="left:1402.50px;top:729px;font-size:16.00px;line-height:21px;color:#fff;">70</span><span class="t" style="left:1472.50px;top:729px;font-size:16.00px;line-height:21px;color:#fff;">80</span><span class="t" style="left:1542.50px;top:729px;font-size:16.00px;line-height:21px;color:#fff;">90</span><span class="t" style="left:1612.50px;top:729px;font-size:16.00px;line-height:21px;color:#fff;">100</span><div class="b" style="left:745.00px;top:754.00px;width:933.30px;height:27.70px;background:#424242;"></div><div class="b" style="left:745.00px;top:754.00px;width:14.00px;height:27.70px;background:linear-gradient(180deg,#303030,#1e1e1e);"></div><span class="t" style="left:763.60px;top:758px;font-size:16.00px;line-height:21px;color:#f6f6f6;letter-spacing:-0.437px;">x: CIE31</span><span class="t" style="left:902.50px;top:758px;font-size:16.00px;line-height:21px;color:#f6f6f6;">0,27</span><span class="t" style="left:982.50px;top:758px;font-size:16.00px;line-height:21px;color:#f6f6f6;">0,30</span><span class="t" style="left:1052.50px;top:758px;font-size:16.00px;line-height:21px;color:#f6f6f6;">0,31</span><span class="t" style="left:1122.50px;top:758px;font-size:16.00px;line-height:21px;color:#f6f6f6;">0,31</span><span class="t" style="left:1192.50px;top:758px;font-size:16.00px;line-height:21px;color:#f6f6f6;">0,31</span><span class="t" style="left:1262.50px;top:758px;font-size:16.00px;line-height:21px;color:#f6f6f6;">0,31</span><span class="t" style="left:1332.50px;top:758px;font-size:16.00px;line-height:21px;color:#f6f6f6;">0,31</span><span class="t" style="left:1402.50px;top:758px;font-size:16.00px;line-height:21px;color:#f6f6f6;">0,31</span><span class="t" style="left:1472.50px;top:758px;font-size:16.00px;line-height:21px;color:#f6f6f6;">0,31</span><span class="t" style="left:1542.50px;top:758px;font-size:16.00px;line-height:21px;color:#f6f6f6;">0,31</span><span class="t" style="left:1612.50px;top:758px;font-size:16.00px;line-height:21px;color:#f6f6f6;">0,31</span><div class="b" style="left:745.00px;top:781.40px;width:933.30px;height:27.70px;background:#7b7b7b;"></div><div class="b" style="left:745.00px;top:781.40px;width:14.00px;height:27.70px;background:linear-gradient(180deg,#3a3a3a,#2a2a2a);"></div><span class="t" style="left:763.60px;top:786px;font-size:16.00px;line-height:21px;color:#ececec;letter-spacing:-0.437px;">y: CIE31</span><span class="t" style="left:902.50px;top:786px;font-size:16.00px;line-height:21px;color:#ececec;">0,26</span><span class="t" style="left:982.50px;top:786px;font-size:16.00px;line-height:21px;color:#ececec;">0,32</span><span class="t" style="left:1052.50px;top:786px;font-size:16.00px;line-height:21px;color:#ececec;">0,32</span><span class="t" style="left:1122.50px;top:786px;font-size:16.00px;line-height:21px;color:#ececec;">0,32</span><span class="t" style="left:1192.50px;top:786px;font-size:16.00px;line-height:21px;color:#ececec;">0,33</span><span class="t" style="left:1262.50px;top:786px;font-size:16.00px;line-height:21px;color:#ececec;">0,33</span><span class="t" style="left:1332.50px;top:786px;font-size:16.00px;line-height:21px;color:#ececec;">0,33</span><span class="t" style="left:1402.50px;top:786px;font-size:16.00px;line-height:21px;color:#ececec;">0,33</span><span class="t" style="left:1472.50px;top:786px;font-size:16.00px;line-height:21px;color:#ececec;">0,33</span><span class="t" style="left:1542.50px;top:786px;font-size:16.00px;line-height:21px;color:#ececec;">0,33</span><span class="t" style="left:1612.50px;top:786px;font-size:16.00px;line-height:21px;color:#ececec;">0,33</span><div class="b" style="left:745.00px;top:808.80px;width:933.30px;height:27.70px;background:#424242;"></div><div class="b" style="left:745.00px;top:808.80px;width:14.00px;height:27.70px;background:linear-gradient(180deg,#303030,#1e1e1e);"></div><span class="t" style="left:763.60px;top:813px;font-size:16.00px;line-height:21px;color:#f6f6f6;">Y</span><span class="t" style="left:902.50px;top:813px;font-size:16.00px;line-height:21px;color:#f6f6f6;">0,38</span><span class="t" style="left:982.50px;top:813px;font-size:16.00px;line-height:21px;color:#f6f6f6;">3,23</span><span class="t" style="left:1052.50px;top:813px;font-size:16.00px;line-height:21px;color:#f6f6f6;">14,28</span><span class="t" style="left:1122.50px;top:813px;font-size:16.00px;line-height:21px;color:#f6f6f6;">34,35</span><span class="t" style="left:1192.50px;top:813px;font-size:16.00px;line-height:21px;color:#f6f6f6;">65,85</span><span class="t" style="left:1262.50px;top:813px;font-size:16.00px;line-height:21px;color:#f6f6f6;">109,20</span><span class="t" style="left:1332.50px;top:813px;font-size:16.00px;line-height:21px;color:#f6f6f6;">161,88</span><span class="t" style="left:1402.50px;top:813px;font-size:16.00px;line-height:21px;color:#f6f6f6;">223,50</span><span class="t" style="left:1472.50px;top:813px;font-size:16.00px;line-height:21px;color:#f6f6f6;">303,21</span><span class="t" style="left:1542.50px;top:813px;font-size:16.00px;line-height:21px;color:#f6f6f6;">396,64</span><span class="t" style="left:1612.50px;top:813px;font-size:16.00px;line-height:21px;color:#f6f6f6;">505,01</span><div class="b" style="left:745.00px;top:836.20px;width:933.30px;height:27.70px;background:#7b7b7b;"></div><div class="b" style="left:745.00px;top:836.20px;width:14.00px;height:27.70px;background:linear-gradient(180deg,#3a3a3a,#2a2a2a);"></div><span class="t" style="left:763.60px;top:841px;font-size:16.00px;line-height:21px;color:#ececec;letter-spacing:0.286px;">Target Y</span><span class="t" style="left:902.50px;top:841px;font-size:16.00px;line-height:21px;color:#ececec;">0,00</span><span class="t" style="left:982.50px;top:841px;font-size:16.00px;line-height:21px;color:#ececec;">5,22</span><span class="t" style="left:1052.50px;top:841px;font-size:16.00px;line-height:21px;color:#ececec;">16,72</span><span class="t" style="left:1122.50px;top:841px;font-size:16.00px;line-height:21px;color:#ececec;">36,50</span><span class="t" style="left:1192.50px;top:841px;font-size:16.00px;line-height:21px;color:#ececec;">67,10</span><span class="t" style="left:1262.50px;top:841px;font-size:16.00px;line-height:21px;color:#ececec;">109,01</span><span class="t" style="left:1332.50px;top:841px;font-size:16.00px;line-height:21px;color:#ececec;">160,87</span><span class="t" style="left:1402.50px;top:841px;font-size:16.00px;line-height:21px;color:#ececec;">224,83</span><span class="t" style="left:1472.50px;top:841px;font-size:16.00px;line-height:21px;color:#ececec;">304,94</span><span class="t" style="left:1542.50px;top:841px;font-size:16.00px;line-height:21px;color:#ececec;">399,61</span><span class="t" style="left:1612.50px;top:841px;font-size:16.00px;line-height:21px;color:#ececec;">505,01</span><div class="b" style="left:745.00px;top:863.60px;width:933.30px;height:27.70px;background:#424242;"></div><div class="b" style="left:745.00px;top:863.60px;width:14.00px;height:27.70px;background:linear-gradient(180deg,#303030,#1e1e1e);"></div><span class="t" style="left:763.60px;top:868px;font-size:16.00px;line-height:21px;color:#f6f6f6;letter-spacing:0.693px;">Gamma Log/Log</span><span class="t" style="left:902.50px;top:868px;font-size:16.00px;line-height:21px;color:#f6f6f6;">1,28</span><span class="t" style="left:982.50px;top:868px;font-size:16.00px;line-height:21px;color:#f6f6f6;">2,21</span><span class="t" style="left:1052.50px;top:868px;font-size:16.00px;line-height:21px;color:#f6f6f6;">2,22</span><span class="t" style="left:1122.50px;top:868px;font-size:16.00px;line-height:21px;color:#f6f6f6;">2,22</span><span class="t" style="left:1192.50px;top:868px;font-size:16.00px;line-height:21px;color:#f6f6f6;">2,22</span><span class="t" style="left:1262.50px;top:868px;font-size:16.00px;line-height:21px;color:#f6f6f6;">2,22</span><span class="t" style="left:1332.50px;top:868px;font-size:16.00px;line-height:21px;color:#f6f6f6;">2,23</span><span class="t" style="left:1402.50px;top:868px;font-size:16.00px;line-height:21px;color:#f6f6f6;">2,27</span><span class="t" style="left:1472.50px;top:868px;font-size:16.00px;line-height:21px;color:#f6f6f6;">2,29</span><span class="t" style="left:1542.50px;top:868px;font-size:16.00px;line-height:21px;color:#f6f6f6;">2,34</span><span class="t" style="left:1612.50px;top:868px;font-size:16.00px;line-height:21px;color:#f6f6f6;">2,27</span><div class="b" style="left:745.00px;top:891.00px;width:933.30px;height:27.70px;background:#7b7b7b;"></div><div class="b" style="left:745.00px;top:891.00px;width:14.00px;height:27.70px;background:linear-gradient(180deg,#3a3a3a,#2a2a2a);"></div><span class="t" style="left:763.60px;top:896px;font-size:16.00px;line-height:21px;color:#ececec;letter-spacing:-1.791px;">CCT</span><span class="t" style="left:902.50px;top:896px;font-size:16.00px;line-height:21px;color:#ececec;letter-spacing:0.109px;">13699,00</span><span class="t" style="left:982.50px;top:896px;font-size:16.00px;line-height:21px;color:#ececec;letter-spacing:0.425px;">7011,00</span><span class="t" style="left:1052.50px;top:896px;font-size:16.00px;line-height:21px;color:#ececec;letter-spacing:0.227px;">6917,00</span><span class="t" style="left:1122.50px;top:896px;font-size:16.00px;line-height:21px;color:#ececec;letter-spacing:0.227px;">6874,00</span><span class="t" style="left:1192.50px;top:896px;font-size:16.00px;line-height:21px;color:#ececec;letter-spacing:0.227px;">6854,00</span><span class="t" style="left:1262.50px;top:896px;font-size:16.00px;line-height:21px;color:#ececec;letter-spacing:0.227px;">6833,00</span><span class="t" style="left:1332.50px;top:896px;font-size:16.00px;line-height:21px;color:#ececec;letter-spacing:0.227px;">6815,00</span><span class="t" style="left:1402.50px;top:896px;font-size:16.00px;line-height:21px;color:#ececec;letter-spacing:0.227px;">6821,00</span><span class="t" style="left:1472.50px;top:896px;font-size:16.00px;line-height:21px;color:#ececec;letter-spacing:0.227px;">6818,00</span><span class="t" style="left:1542.50px;top:896px;font-size:16.00px;line-height:21px;color:#ececec;letter-spacing:0.227px;">6825,00</span><span class="t" style="left:1612.50px;top:896px;font-size:16.00px;line-height:21px;color:#ececec;letter-spacing:0.227px;">6814,00</span><div class="b" style="left:745.00px;top:918.40px;width:933.30px;height:27.70px;background:#424242;"></div><div class="b" style="left:745.00px;top:918.40px;width:14.00px;height:27.70px;background:linear-gradient(180deg,#303030,#1e1e1e);"></div><span class="t" style="left:763.60px;top:923px;font-size:16.00px;line-height:21px;color:#f6f6f6;letter-spacing:0.100px;">ΔE 2000</span><span class="t" style="left:902.50px;top:923px;font-size:16.00px;line-height:21px;color:#f6f6f6;">0,98</span><span class="t" style="left:982.50px;top:923px;font-size:16.00px;line-height:21px;color:#f6f6f6;">2,22</span><span class="t" style="left:1052.50px;top:923px;font-size:16.00px;line-height:21px;color:#f6f6f6;">1,67</span><span class="t" style="left:1122.50px;top:923px;font-size:16.00px;line-height:21px;color:#f6f6f6;">1,46</span><span class="t" style="left:1192.50px;top:923px;font-size:16.00px;line-height:21px;color:#f6f6f6;">1,52</span><span class="t" style="left:1262.50px;top:923px;font-size:16.00px;line-height:21px;color:#f6f6f6;">1,73</span><span class="t" style="left:1332.50px;top:923px;font-size:16.00px;line-height:21px;color:#f6f6f6;">1,76</span><span class="t" style="left:1402.50px;top:923px;font-size:16.00px;line-height:21px;color:#f6f6f6;">2,00</span><span class="t" style="left:1472.50px;top:923px;font-size:16.00px;line-height:21px;color:#f6f6f6;">2,18</span><span class="t" style="left:1542.50px;top:923px;font-size:16.00px;line-height:21px;color:#f6f6f6;">2,49</span><span class="t" style="left:1612.50px;top:923px;font-size:16.00px;line-height:21px;color:#f6f6f6;">2,68</span><div class="b" style="left:1.70px;top:969.00px;width:139.30px;height:68.20px;border-radius:5px;background:linear-gradient(180deg,#b0b0b0 0%,#9a9a9a 6%,#8a8a8a 35%,#767676 70%,#5e5e5e 100%);"></div><div class="b" style="left:6.70px;top:975.00px;width:128.50px;height:40.30px;border-radius:3.5px;background:#000000;box-shadow:0 0 0 1px rgba(0,0,0,0.25);"></div><span class="t" style="left:67.84px;top:1022px;font-size:11.00px;line-height:14px;color:#2c2c2c;font-weight:bold;">0</span><div class="b" style="left:143.57px;top:969.00px;width:139.30px;height:68.20px;border-radius:5px;background:linear-gradient(180deg,#b0b0b0 0%,#9a9a9a 6%,#8a8a8a 35%,#767676 70%,#5e5e5e 100%);"></div><div class="b" style="left:148.57px;top:975.00px;width:128.50px;height:40.30px;border-radius:3.5px;background:#1a1a1a;box-shadow:0 0 0 1px rgba(0,0,0,0.25);"></div><span class="t" style="left:206.04px;top:1022px;font-size:11.00px;line-height:14px;color:#2c2c2c;letter-spacing:1.223px;font-weight:bold;">10</span><div class="b" style="left:285.44px;top:969.00px;width:139.30px;height:68.20px;border-radius:5px;background:linear-gradient(180deg,#b0b0b0 0%,#9a9a9a 6%,#8a8a8a 35%,#767676 70%,#5e5e5e 100%);"></div><div class="b" style="left:290.44px;top:975.00px;width:128.50px;height:40.30px;border-radius:3.5px;background:#333333;box-shadow:0 0 0 1px rgba(0,0,0,0.25);"></div><span class="t" style="left:347.91px;top:1022px;font-size:11.00px;line-height:14px;color:#2c2c2c;letter-spacing:1.223px;font-weight:bold;">20</span><div class="b" style="left:427.31px;top:969.00px;width:139.30px;height:68.20px;border-radius:5px;background:linear-gradient(180deg,#b0b0b0 0%,#9a9a9a 6%,#8a8a8a 35%,#767676 70%,#5e5e5e 100%);"></div><div class="b" style="left:432.31px;top:975.00px;width:128.50px;height:40.30px;border-radius:3.5px;background:#4e4e4e;box-shadow:0 0 0 1px rgba(255,255,255,0.10);"></div><span class="t" style="left:489.78px;top:1022px;font-size:11.00px;line-height:14px;color:#2c2c2c;letter-spacing:1.223px;font-weight:bold;">30</span><div class="b" style="left:569.18px;top:969.00px;width:139.30px;height:68.20px;border-radius:5px;background:linear-gradient(180deg,#b0b0b0 0%,#9a9a9a 6%,#8a8a8a 35%,#767676 70%,#5e5e5e 100%);"></div><div class="b" style="left:574.18px;top:975.00px;width:128.50px;height:40.30px;border-radius:3.5px;background:#686868;box-shadow:0 0 0 1px rgba(255,255,255,0.10);"></div><span class="t" style="left:631.65px;top:1022px;font-size:11.00px;line-height:14px;color:#2c2c2c;letter-spacing:1.223px;font-weight:bold;">40</span><div class="b" style="left:711.05px;top:969.00px;width:139.30px;height:68.20px;border-radius:5px;background:linear-gradient(180deg,#b0b0b0 0%,#9a9a9a 6%,#8a8a8a 35%,#767676 70%,#5e5e5e 100%);"></div><div class="b" style="left:716.05px;top:975.00px;width:128.50px;height:40.30px;border-radius:3.5px;background:#828282;box-shadow:0 0 0 1px rgba(255,255,255,0.10);"></div><span class="t" style="left:773.52px;top:1022px;font-size:11.00px;line-height:14px;color:#2c2c2c;letter-spacing:1.223px;font-weight:bold;">50</span><div class="b" style="left:852.92px;top:969.00px;width:139.30px;height:68.20px;border-radius:5px;background:linear-gradient(180deg,#b0b0b0 0%,#9a9a9a 6%,#8a8a8a 35%,#767676 70%,#5e5e5e 100%);"></div><div class="b" style="left:857.92px;top:975.00px;width:128.50px;height:40.30px;border-radius:3.5px;background:#9c9c9c;box-shadow:0 0 0 1px rgba(255,255,255,0.10);"></div><span class="t" style="left:915.39px;top:1022px;font-size:11.00px;line-height:14px;color:#2c2c2c;letter-spacing:1.223px;font-weight:bold;">60</span><div class="b" style="left:994.79px;top:969.00px;width:139.30px;height:68.20px;border-radius:5px;background:linear-gradient(180deg,#b0b0b0 0%,#9a9a9a 6%,#8a8a8a 35%,#767676 70%,#5e5e5e 100%);"></div><div class="b" style="left:999.79px;top:975.00px;width:128.50px;height:40.30px;border-radius:3.5px;background:#b5b5b5;box-shadow:0 0 0 1px rgba(255,255,255,0.10);"></div><span class="t" style="left:1057.26px;top:1022px;font-size:11.00px;line-height:14px;color:#2c2c2c;letter-spacing:1.223px;font-weight:bold;">70</span><div class="b" style="left:1136.66px;top:969.00px;width:139.30px;height:68.20px;border-radius:5px;background:linear-gradient(180deg,#b0b0b0 0%,#9a9a9a 6%,#8a8a8a 35%,#767676 70%,#5e5e5e 100%);"></div><div class="b" style="left:1141.66px;top:975.00px;width:128.50px;height:40.30px;border-radius:3.5px;background:#cfcfcf;box-shadow:0 0 0 1px rgba(255,255,255,0.10);"></div><span class="t" style="left:1199.13px;top:1022px;font-size:11.00px;line-height:14px;color:#2c2c2c;letter-spacing:1.223px;font-weight:bold;">80</span><div class="b" style="left:1278.53px;top:969.00px;width:139.30px;height:68.20px;border-radius:5px;background:linear-gradient(180deg,#b0b0b0 0%,#9a9a9a 6%,#8a8a8a 35%,#767676 70%,#5e5e5e 100%);"></div><div class="b" style="left:1283.53px;top:975.00px;width:128.50px;height:40.30px;border-radius:3.5px;background:#e8e8e8;box-shadow:0 0 0 1px rgba(255,255,255,0.10);"></div><span class="t" style="left:1341.00px;top:1022px;font-size:11.00px;line-height:14px;color:#2c2c2c;letter-spacing:1.223px;font-weight:bold;">90</span><div class="b" style="left:1420.40px;top:969.00px;width:139.30px;height:68.20px;border-radius:5px;background:linear-gradient(180deg,#1e1e1e 0%,#262626 60%,#343434 100%);"></div><div class="b" style="left:1425.40px;top:975.00px;width:128.50px;height:40.30px;border-radius:3.5px;background:#ffffff;box-shadow:0 0 0 1px rgba(0,0,0,0.25);"></div><span class="t" style="left:1479.51px;top:1022px;font-size:11.50px;line-height:14px;color:#fff;letter-spacing:0.502px;font-weight:bold;">100</span><div class="b" style="left:1563.00px;top:969.00px;width:54.50px;height:20.50px;border-radius:5px 5px 0 0;background:linear-gradient(180deg,#aaa,#8a8a8a);"></div><div class="b" style="left:1563.00px;top:991.00px;width:54.50px;height:46.20px;border-radius:0 0 5px 5px;background:linear-gradient(180deg,#8e8e8e,#6a6a6a);"></div><svg style="left:1563px;top:969px" width="55" height="70" viewBox="0 0 55 70">
<defs><linearGradient id="bg1" x1="0" y1="0" x2="0" y2="1"><stop offset="0" stop-color="#747474"/><stop offset="1" stop-color="#a4a4a4"/></linearGradient></defs>
<circle cx="27" cy="9.7" r="8" fill="url(#bg1)"/><path d="M22 12.6h10l-5-5.6z" fill="#303030"/>
<rect x="9.6" y="26.9" width="35.4" height="35.6" rx="5" fill="#2a2a2a" opacity="0.55"/><rect x="10.4" y="27.6" width="33.8" height="34.2" rx="4" fill="#141414"/>
<rect x="14" y="31.8" width="26.6" height="12.9" fill="#d2d2d2"/><rect x="14" y="44.7" width="26.6" height="12.8" fill="#b4b4b4"/>
</svg><div class="b" style="left:1619.00px;top:969.00px;width:50.60px;height:33.60px;background:linear-gradient(180deg,#a8a8a8 0%,#8c8c8c 50%,#6e6e6e 100%);"></div><div class="b" style="left:1670.60px;top:969.00px;width:49.90px;height:33.60px;background:linear-gradient(180deg,#a8a8a8 0%,#8c8c8c 50%,#6e6e6e 100%);"></div><div class="b" style="left:1721.50px;top:969.00px;width:49.90px;height:33.60px;background:linear-gradient(180deg,#a8a8a8 0%,#8c8c8c 50%,#6e6e6e 100%);"></div><div class="b" style="left:1772.40px;top:969.00px;width:50.20px;height:33.60px;background:linear-gradient(180deg,#a8a8a8 0%,#8c8c8c 50%,#6e6e6e 100%);"></div><div class="b" style="left:1823.60px;top:969.00px;width:50.00px;height:33.60px;background:linear-gradient(180deg,#a8a8a8 0%,#8c8c8c 50%,#6e6e6e 100%);"></div><div class="b" style="left:1874.60px;top:969.00px;width:46.00px;height:33.60px;background:linear-gradient(180deg,#303030,#3c3c3c);"></div><div class="b" style="left:1619.00px;top:1004.40px;width:152.60px;height:32.80px;border-radius:0 0 0 4px;background:linear-gradient(180deg,#a4a4a4 0%,#8e8e8e 50%,#747474 100%);"></div><div class="b" style="left:1772.60px;top:1004.40px;width:148.00px;height:32.80px;background:linear-gradient(180deg,#a4a4a4 0%,#8e8e8e 50%,#747474 100%);"></div><svg style="left:1600px;top:960px" width="320" height="79" viewBox="0 0 320 79"><g><circle cx="44.4" cy="25.6" r="11" fill="url(#bg1)"/><circle cx="96.4" cy="25.6" r="11" fill="url(#bg1)"/><circle cx="147.0" cy="25.6" r="11" fill="url(#bg1)"/><circle cx="198.2" cy="25.6" r="11" fill="url(#bg1)"/><circle cx="248.7" cy="25.6" r="11" fill="url(#bg1)"/><circle cx="300.8" cy="26" r="11.2" fill="#2b2b2b"/><rect x="39.9" y="21.1" width="9" height="9" fill="#303030"/><path d="M92.6 19.6v12l9.4-6z" fill="#303030"/><path d="M143.6 20.2h-2.6v10.8h2.6M150.4 20.2h2.6v10.8h-2.6" fill="none" stroke="#303030" stroke-width="2.2"/><circle cx="145.3" cy="25.6" r="1.05" fill="#303030"/><circle cx="148.7" cy="25.6" r="1.05" fill="#303030"/><path d="M198.2 25.4c-1.5-2.2-2.7-2.9-4-2.9a2.9 2.9 0 0 0 0 5.8c1.3 0 2.5-.7 4-2.9c1.5 2.2 2.7 2.9 4 2.9a2.9 2.9 0 0 0 0-5.8c-1.3 0-2.5.7-4 2.9z" fill="none" stroke="#303030" stroke-width="2.1"/><g transform="translate(248.7,25.6)" fill="none" stroke="#303030" stroke-width="2.4"><path d="M-5.6 -1.2a5.8 5.8 0 0 1 10 -3"/><path d="M5.6 1.2a5.8 5.8 0 0 1 -10 3"/></g><path d="M254.6 17.6v5.6h-5.6z M242.8 33.6v-5.6h5.6z" fill="#303030"/><circle cx="53" cy="61.3" r="11" fill="url(#bg1)"/><circle cx="294.9" cy="61.3" r="11" fill="url(#bg1)"/><path d="M52.4 56.8l-3.6 4.5l3.6 4.5M57.4 56.8l-3.6 4.5l3.6 4.5" fill="none" stroke="#2a2a2a" stroke-width="1.7"/><path d="M290.6 56.8l3.6 4.5l-3.6 4.5M295.6 56.8l3.6 4.5l-3.6 4.5" fill="none" stroke="#2a2a2a" stroke-width="1.7"/></g></svg><span class="t" style="left:1684.00px;top:1007px;font-size:23.60px;line-height:30px;color:#363636;font-weight:bold;transform:scaleX(1.0067);transform-origin:0 0;text-shadow:0 1px 1px rgba(255,255,255,0.25);">Back</span><span class="t" style="left:1804.30px;top:1007px;font-size:23.60px;line-height:30px;color:#363636;font-weight:bold;transform:scaleX(1.1299);transform-origin:0 0;text-shadow:0 1px 1px rgba(255,255,255,0.25);">Next</span></body></html>
